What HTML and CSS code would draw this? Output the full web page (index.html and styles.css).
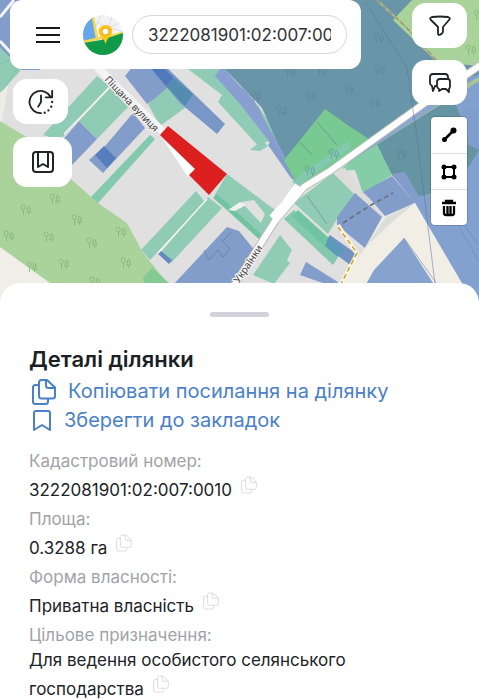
FILE: index.html
```html
<!DOCTYPE html>
<html lang="uk">
    <head>
        <meta charset="UTF-8">
        <meta name="viewport" content="width=device-width, initial-scale=1">
        <title>Деталі ділянки</title>
        <link rel="stylesheet" href="styles.css">
    </head>
    <body>
        <svg class="sprite" width="0" height="0" aria-hidden="true">
            <symbol id="copy" viewBox="0 0 24 26">
                <path d="M7 6H3.500Q1 6 1 8.500V22.500Q1 25 3.500 25H13.500Q16 25 16 22.500V19.500M9.500 1H15L23 8.500V17Q23 19.500 20.500 19.500H9.500Q7 19.500 7 17V3.500Q7 1 9.500 1ZM14 1V6.500Q14 9 16.500 9H23"/>
            </symbol>
            <symbol id="trees" viewBox="0 0 12 12">
                <path d="M3.500 11V6M1.500 5Q0 1 3.500 1Q6 1 5 5Q3.500 7 1.500 5ZM8.500 11V8M8.500 2L7 5H8L6.500 8H11L9.500 5H10.500Z"/>
            </symbol>
        </svg>

        <!-- Map with controls -->
        <div class="map">
            <svg class="map-canvas" viewBox="0 0 479 303" preserveAspectRatio="xMidYMin slice" aria-hidden="true">
                <rect width="479" height="304" fill="#e0e0e0"/>
                <!-- left edge -->
                <path d="M0 0H40V70H22L0 48Z" fill="#829dca"/>
                <path d="M0 48L22 69L0 93Z" fill="#90ccb5"/>
                <path d="M0 64L14 58M3 90L20 65" stroke="#74b99f" stroke-width=".6"/>
                <path d="M0 17L14 0M0 41L12 54" stroke="#f4f4f4" stroke-width="3"/>
                <path d="M0 93L8 86L2 122H0Z" fill="#eeece5"/>
                <!-- forest on the left -->
                <path d="M0 121L30 139L72 180L98 203L127 223L143 253L170 286V304H0Z" fill="#aad39c"/>
                <path d="M0 247L50 283V304H0Z" fill="#f1eee7"/>
                <path d="M152 268L170 284H145L143 278Z" fill="#82c993"/>
                <!-- parcels near the street -->
                <path d="M97 76L109 86L60 140L43 135Z" fill="#90ccb5"/>
                <path d="M110 88L128 107L97 139L79 121Z" fill="#90ccb5"/>
                <path d="M79 121L97 139L72 165L60 143Z" fill="#829dca"/>
                <path d="M133 113L145 128L103 173L89 160L106 145Z" fill="#829dca"/>
                <path d="M104 146L116 158L107 168L95 155Z" fill="#567dbe"/>
                <path d="M150 135L155 139L98 203L91 197Z" fill="#82c9ae"/>
                <path d="M125 76L133 66H152L175 87L147 104Z" fill="#829dca"/>
                <path d="M168 87L193 102L160 126L148 104Z" fill="#90ccb5"/>
                <path d="M149 66H165L195 95L225 124L217 134L180 103Z" fill="#7897c7"/>
                <path d="M149 66H162L174 78L166 86Z" fill="#5079bd"/>
                <path d="M174 78L193 94L185 106L166 86Z" fill="#538caf"/>
                <path d="M196 191L205 202L150 260L141 250Z" fill="#90ccb5"/>
                <path d="M208 197L222 208L171 263L161 252Z" fill="#90ccb5"/>
                <path d="M161 251L172 260L169 264L158 254Z" fill="#6687bd"/>
                <path d="M172 286L227 227L239 231L256 252L230 290Z" fill="#829dca"/>
                <path d="M204 250L209 260L218 250L223 257L230 249L223 241L231 232" fill="none" stroke="#627ca6" stroke-width=".7"/>
                <path d="M227 174L279 213L266 241L259 239L213 198Z" fill="#90ccb5"/>
                <path d="M215 196L226 205L232 211L256 233L264 240" fill="none" stroke="#72c4a0" stroke-width="5"/>
                <path d="M241 202L254 200L265 214L261 223Z" fill="#e0e0e0"/>
                <path d="M228 210L240 202L246 205L235 211Z" fill="#eef3ef"/>
                <!-- large wood at the top -->
                <path d="M184 66H222L240 86L260 108L286 152L300 190L262 150L218 102L222 95Z" fill="#90ccb5"/>
                <path d="M241 130L258 146L268 141L300 178L284 184L241 150Z" fill="#e0e0e0"/>
                <path d="M250 150L262 140L268 146L260 151Z" fill="#90ccb5"/>
                <path d="M215 0H479V160L418 196L369 150L285 160L262 108L222 66Z" fill="#6896a8"/>
                <path d="M222 66L240 86Q255 98 263 117L287 160L280 155L254 122L240 104L215 76Z" fill="#889fd0"/>
                <path d="M272 140L302 186L291 178L268 145Z" fill="#829dca"/>
                <path d="M412 0H479V66L437 62L393 20Z" fill="#aad39c"/>
                <path d="M377 0L405 26L437 61" fill="none" stroke="#b9b98b" stroke-width="2"/>
                <path d="M377 0L405 26L437 61" fill="none" stroke="#8a7965" stroke-dasharray="5 3"/>
                <!-- east side -->
                <path d="M415 203L392 175L405 155L418 195L440 194L450 80L479 75V304H465Z" fill="#83a1cf"/>
                <path d="M370 143L450 90L462 120L479 130V150L470 165L440 193L418 196L392 175Z" fill="#6594a3"/>
                <path d="M392 174L405 172L418 195L415 203Z" fill="#829dca"/>
                <path d="M462 112L479 107V150L468 145Z" fill="#819dcc"/>
                <path d="M325 109L349 126L375 143L302 193L284 160Z" fill="#78c992"/>
                <path d="M375 140L392 175L363 194L355 170L339 171Z" fill="#84cda6"/>
                <path d="M333 173L355 195L337 219L328 234L294 203Z" fill="#90ccb5"/>
                <path d="M336 170L345 168L363 192L384 217L378 218L337 176Z" fill="#dddcda"/>
                <path d="M392 176L415 203L386 217L371 200L363 192Z" fill="#829dca"/>
                <path d="M355 193L382 217L365 248L337 225V217Z" fill="#829dca"/>
                <path d="M415 203L466 290H335L365 248L383 217Z" fill="#f1eee6"/>
                <path d="M386 217L415 203L392 222L365 248Z" fill="#dcdeda"/>
                <path d="M404 238L435 286H365L374 270Z" fill="#86a3cf"/>
                <path d="M294 210L338 257L333 265L284 219Z" fill="#82c9ae"/>
                <path d="M298 210L330 239L325 247L292 216Z" fill="#70c4a1"/>
                <path d="M330 235L358 255L350 265L325 246Z" fill="#7592c4"/>
                <path d="M329 236L345 250L338 257L325 246Z" fill="#5b9ab8"/>
                <path d="M306 262L338 282L334 287L300 275Z" fill="#829dca"/>
                <path d="M280 235L292 250L287 260L290 263L274 284L253 275Z" fill="#90ccb5"/>
                <!-- roads -->
                <path d="M479 79L433 107L363 151" fill="none" stroke="#a8c591" stroke-width="4"/>
                <path d="M416 106L330 167L340 168L440 104Z" fill="#8da5d1"/>
                <path d="M350 144L300 180L284 208" fill="none" stroke="#82c9b0" stroke-width="7"/>
                <path d="M485 62L422 105L330 171L304 187L275 221L232 289" fill="none" stroke="#babfba" stroke-width="8"/>
                <path d="M485 62L422 105L330 171L304 187L275 221L232 289" fill="none" stroke="#fff" stroke-width="6"/>
                <path d="M299 186L285 206L273 219" fill="none" stroke="#fff" stroke-width="10"/>
                <path d="M97 67L163 132" fill="none" stroke="#f4f4f4" stroke-width="8"/>
                <path d="M109 88L64 134M207 199L158 253" stroke="#f3f4f1" stroke-width="1.500"/>
                <!-- paths and parcel borders -->
                <path d="M338 225L357 254L341 284" fill="none" stroke="#fff7dd" stroke-width="4"/>
                <path d="M338 227L357 253L341 284" fill="none" stroke="#c3a348" stroke-width="1.500" stroke-dasharray="5 3"/>
                <path d="M343 223L371 205L393 193" fill="none" stroke="#676c7c" stroke-width="1.500" stroke-dasharray="5 3"/>
                <path d="M366 3L407 68L418 145L435 284M317 122L337 145M404 238L437 284M300 142L312 155M307 196L327 224" fill="none" stroke="#587497" stroke-opacity=".65" stroke-width=".8"/>
                <path d="M455 220L479 262M440 193L479 245" stroke="#7188b5" stroke-width=".6"/>
                <g class="map-trees">
                    <use href="#trees" x="49" y="193" width="12" height="12"/>
                    <use href="#trees" x="20" y="204" width="12" height="12"/>
                    <use href="#trees" x="71" y="214" width="12" height="12"/>
                    <use href="#trees" x="3" y="230" width="12" height="12"/>
                    <use href="#trees" x="43" y="231" width="12" height="12"/>
                    <use href="#trees" x="86" y="237" width="12" height="12"/>
                    <use href="#trees" x="115" y="226" width="12" height="12"/>
                    <use href="#trees" x="26" y="261" width="12" height="12"/>
                    <use href="#trees" x="58" y="258" width="12" height="12"/>
                    <use href="#trees" x="120" y="257" width="12" height="12"/>
                    <use href="#trees" x="89" y="276" width="12" height="12"/>
                    <use href="#trees" x="465" y="44" width="12" height="12"/>
                    <use href="#trees" x="473" y="9" width="12" height="12"/>
                </g>
                <g class="map-trees map-trees-dark">
                    <use href="#trees" x="373" y="32" width="12" height="12"/>
                    <use href="#trees" x="374" y="64" width="12" height="12"/>
                    <use href="#trees" x="343" y="84" width="12" height="12"/>
                    <use href="#trees" x="305" y="90" width="12" height="12"/>
                    <use href="#trees" x="369" y="97" width="12" height="12"/>
                    <use href="#trees" x="276" y="105" width="12" height="12"/>
                    <use href="#trees" x="284" y="66" width="12" height="12"/>
                    <use href="#trees" x="316" y="64" width="12" height="12"/>
                    <use href="#trees" x="304" y="165" width="12" height="12"/>
                    <use href="#trees" x="328" y="148" width="12" height="12"/>
                    <use href="#trees" x="396" y="148" width="12" height="12"/>
                    <use href="#trees" x="250" y="90" width="12" height="12"/>
                </g>
                <!-- selected parcel -->
                <path d="M163 139L188 177L195 169Z" fill="#fff"/>
                <path d="M168 126L227 174L209 195L189 175L195 169L160 135Z" fill="#dc201f"/>
                <text class="street" transform="translate(104 80) rotate(46)">Піщана вулиця</text>
                <text class="street" text-anchor="end" transform="translate(263 248) rotate(-56)">Українки</text>
            </svg>

            <div class="map-left">
                <header class="topbar">
                    <button class="menu" type="button" aria-label="Меню">
                        <svg width="24" height="18" viewBox="0 0 24 18"><path d="M0 2H24M0 9H24M0 16H24" stroke="#17191c" stroke-width="2"/></svg>
                    </button>
                    <a class="logo" href="#" aria-label="Головна">
                        <svg width="40" height="40" viewBox="0 0 40 40">
                            <clipPath id="logo-clip"><circle cx="20" cy="20" r="20"/></clipPath>
                            <g clip-path="url(#logo-clip)">
                                <rect width="40" height="40" fill="#f3f2f4"/>
                                <path d="M13 7L30 15M18 0L12 14M29 0L26 12L40 7M24 11L40 17" fill="none" stroke="#dcdce2"/>
                                <path d="M0 0H10L15 24L0 28Z" fill="#63a7e8"/>
                                <path d="M10 2L14 24M0 27L40 18" stroke="#f6d64a" stroke-width="2.500"/>
                                <path d="M0 28L18 25L40 18V40H0Z" fill="#119a48"/>
                                <path d="M22.500 29Q21 24 17.500 21Q14 16 17 12.500Q19 10 22.500 10Q27 10 29 14Q30 18 27 21Q24 24 22.500 29Z" fill="#fdc216"/>
                                <circle cx="22.500" cy="16.500" r="3.500" fill="#fff" stroke="#e4a409"/>
                            </g>
                        </svg>
                    </a>
                    <input class="search" type="text" value="3222081901:02:007:0010" aria-label="Кадастровий номер">
                </header>
                <button class="tile tile-history" type="button" aria-label="Історія">
                    <svg width="26" height="26" viewBox="0 0 28 28">
                        <path d="M14 26A12 12 0 1 1 24 8M19 9H26V2M14 7V14L11 19"/>
                        <path d="M26 14V14.100M25 19V19.100M22 23V23.100M18 25.500V25.600" stroke-width="2.500"/>
                    </svg>
                </button>
                <button class="tile tile-saved" type="button" aria-label="Закладки">
                    <svg width="24" height="24" viewBox="0 0 24 24"><rect x="2" y="2" width="20" height="20" rx="3"/><path d="M7 2V17L12 14L17 17V2"/></svg>
                </button>
            </div>

            <div class="map-right">
                <button class="tile" type="button" aria-label="Фільтр">
                    <svg width="22" height="22" viewBox="0 0 22 22"><path d="M3 2Q11 1 19 2Q22 3 20 5L14 12V16Q14 19 10 20L9 19V12L2 5Q0 3 3 2Z"/></svg>
                </button>
                <button class="tile" type="button" aria-label="Чат">
                    <svg width="24" height="22" viewBox="0 0 24 22">
                        <path d="M8 14H7L5 19L4 14Q2 13 2 11V5Q2 2 5 2H17Q20 2 20 5V7"/>
                        <path d="M12 7H20Q22 7 22 10V14Q22 16 21 17V20L18 17H14L11 19V17Q9 16 9 14V10Q9 7 12 7Z"/>
                    </svg>
                </button>
                <div class="tools">
                    <button type="button" aria-label="Лінія">
                        <svg width="16" height="16" viewBox="0 0 16 16"><path d="M3 13L13 3" stroke="#000" stroke-width="2.500"/><circle cx="3.500" cy="12.500" r="2.500"/><circle cx="12.500" cy="3.500" r="3"/></svg>
                    </button>
                    <button type="button" aria-label="Полігон">
                        <svg width="16" height="16" viewBox="0 0 16 16"><rect x="3" y="3" width="10" height="10" fill="none" stroke="#000" stroke-width="2"/><circle cx="3" cy="3" r="2.500"/><circle cx="13" cy="3" r="2.500"/><circle cx="3" cy="13" r="2.500"/><circle cx="13" cy="13" r="2.500"/></svg>
                    </button>
                    <button type="button" aria-label="Видалити">
                        <svg width="16" height="18" viewBox="0 0 16 18"><path d="M1 4H15M5 4V2H11V4M3 7V14Q3 16 5 16H11Q13 16 13 14V7M6.500 7V15M9.500 7V15" fill="none" stroke="#000" stroke-width="2.300"/></svg>
                    </button>
                </div>
            </div>
        </div>

        <!-- Parcel details -->
        <main class="sheet">
            <div class="handle"></div>
            <h1>Деталі ділянки</h1>
            <a class="action action-copy" href="#">
                <svg width="24" height="26"><use href="#copy"/></svg>
                Копіювати посилання на ділянку
            </a>
            <a class="action action-save" href="#">
                <svg width="20" height="22" viewBox="0 0 20 22"><path d="M2 20V3Q2 1 4 1H16Q18 1 18 3V20L10 15Z"/></svg>
                Зберегти до закладок
            </a>
            <dl class="details">
                <div>
                    <dt>Кадастровий номер:</dt>
                    <dd>3222081901:02:007:0010 <button class="copy" type="button" aria-label="Копіювати"><svg width="16" height="18"><use href="#copy"/></svg></button></dd>
                </div>
                <div>
                    <dt>Площа:</dt>
                    <dd>0.3288 га <button class="copy" type="button" aria-label="Копіювати"><svg width="16" height="18"><use href="#copy"/></svg></button></dd>
                </div>
                <div>
                    <dt>Форма власності:</dt>
                    <dd>Приватна власність <button class="copy" type="button" aria-label="Копіювати"><svg width="16" height="18"><use href="#copy"/></svg></button></dd>
                </div>
                <div>
                    <dt>Цільове призначення:</dt>
                    <dd>Для ведення особистого селянського господарства <button class="copy" type="button" aria-label="Копіювати"><svg width="16" height="18"><use href="#copy"/></svg></button></dd>
                </div>
            </dl>
        </main>
    </body>
</html>
```
FILE: styles.css
```css
* {
    box-sizing: border-box;
}
body {
    margin: 0;
    background-color: #fff;
    font-family: Inter, "Noto Sans", sans-serif;
    font-size: 17px;
    line-height: 25px;
    color: #202328;
}
button {
    padding: 0;
    border: none;
    background: none;
    cursor: pointer;
}
svg {
    display: block;
}
.sprite {
    position: absolute;
}

/* map */
.map {
    position: relative;
    display: flex;
    gap: 51px;
    padding: 0 12px 78px 10px;
    overflow: hidden;
}
.map-canvas {
    position: absolute;
    top: 0;
    left: 0;
    width: 100%;
    height: 100%;
}
.map-trees {
    fill: none;
    stroke: #83b27b;
    stroke-width: 0.8;
}
.map-trees-dark {
    stroke: #4f7a8c;
    opacity: 0.5;
}
.street {
    font-family: "Noto Sans", sans-serif;
    font-size: 10px;
    fill: #3f3f3f;
    stroke: #f4f4f4;
    stroke-width: 2px;
    paint-order: stroke;
}
.map-left,
.map-right {
    position: relative;
    display: flex;
    flex-direction: column;
}
.map-left {
    flex: 1;
    min-width: 0;
    align-items: flex-start;
}
.map-right {
    align-items: flex-end;
    gap: 12px;
    padding-top: 3px;
}
.topbar {
    display: flex;
    align-items: center;
    width: 100%;
    height: 69px;
    padding: 0 14px 0 26px;
    background-color: #fff;
    border-radius: 12px;
}
.logo {
    margin: 0 9px 0 23px;
}
.search {
    flex: 1;
    min-width: 0;
    height: 39px;
    padding: 0 15px;
    border: 1px solid #d5d6da;
    border-radius: 20px;
    background-color: #fff;
    font: inherit;
    color: #303237;
}
.tile {
    display: flex;
    align-items: center;
    justify-content: center;
    width: 55px;
    height: 45px;
    border-radius: 14px;
    background-color: #fff;
}
.tile svg {
    fill: none;
    stroke: #202328;
    stroke-width: 2;
    stroke-linecap: round;
    stroke-linejoin: round;
}
.map-right .tile svg {
    stroke-width: 1.8;
}
.tile-history {
    margin: 10px 0 0 3px;
}
.tile-saved {
    width: 59px;
    height: 50px;
    margin: 13px 0 0 3px;
}
.tools {
    width: 36px;
    border-radius: 4px;
    background-color: #fff;
    box-shadow: 0 0 0 1px rgba(0, 0, 0, 0.15);
}
.tools button {
    display: flex;
    align-items: center;
    justify-content: center;
    width: 100%;
    height: 36px;
}
.tools button + button {
    border-top: 1px solid #ddd;
}

/* bottom sheet */
.sheet {
    position: relative;
    margin-top: -20px;
    padding: 29px 29px 0;
    border-radius: 20px 20px 0 0;
    background-color: #fff;
}
.handle {
    width: 59px;
    height: 5px;
    margin: 0 auto;
    border-radius: 3px;
    background-color: #d1d1dc;
}
h1 {
    margin: 28px 0 0;
    font-size: 22px;
    line-height: 29px;
    font-weight: 600;
    color: #1c1f26;
}
.action {
    display: flex;
    align-items: center;
    gap: 12px;
    height: 29px;
    padding-left: 3px;
    font-size: 20px;
    color: #4a80c7;
    text-decoration: none;
}
.action svg {
    flex: none;
    fill: none;
    stroke: #4a80c7;
    stroke-width: 2;
    stroke-linejoin: round;
}
.action-copy {
    margin-top: 3px;
}
.details {
    display: flex;
    flex-direction: column;
    gap: 4px;
    margin: 14px 0 0;
}
dt {
    color: #a1a3a8;
}
dd {
    max-width: 340px;
    margin: 0;
}
.copy {
    height: 22px;
    margin-left: 4px;
    vertical-align: baseline;
}
.copy svg {
    fill: none;
    stroke: #dcdcdf;
    stroke-width: 1.5;
}
```
